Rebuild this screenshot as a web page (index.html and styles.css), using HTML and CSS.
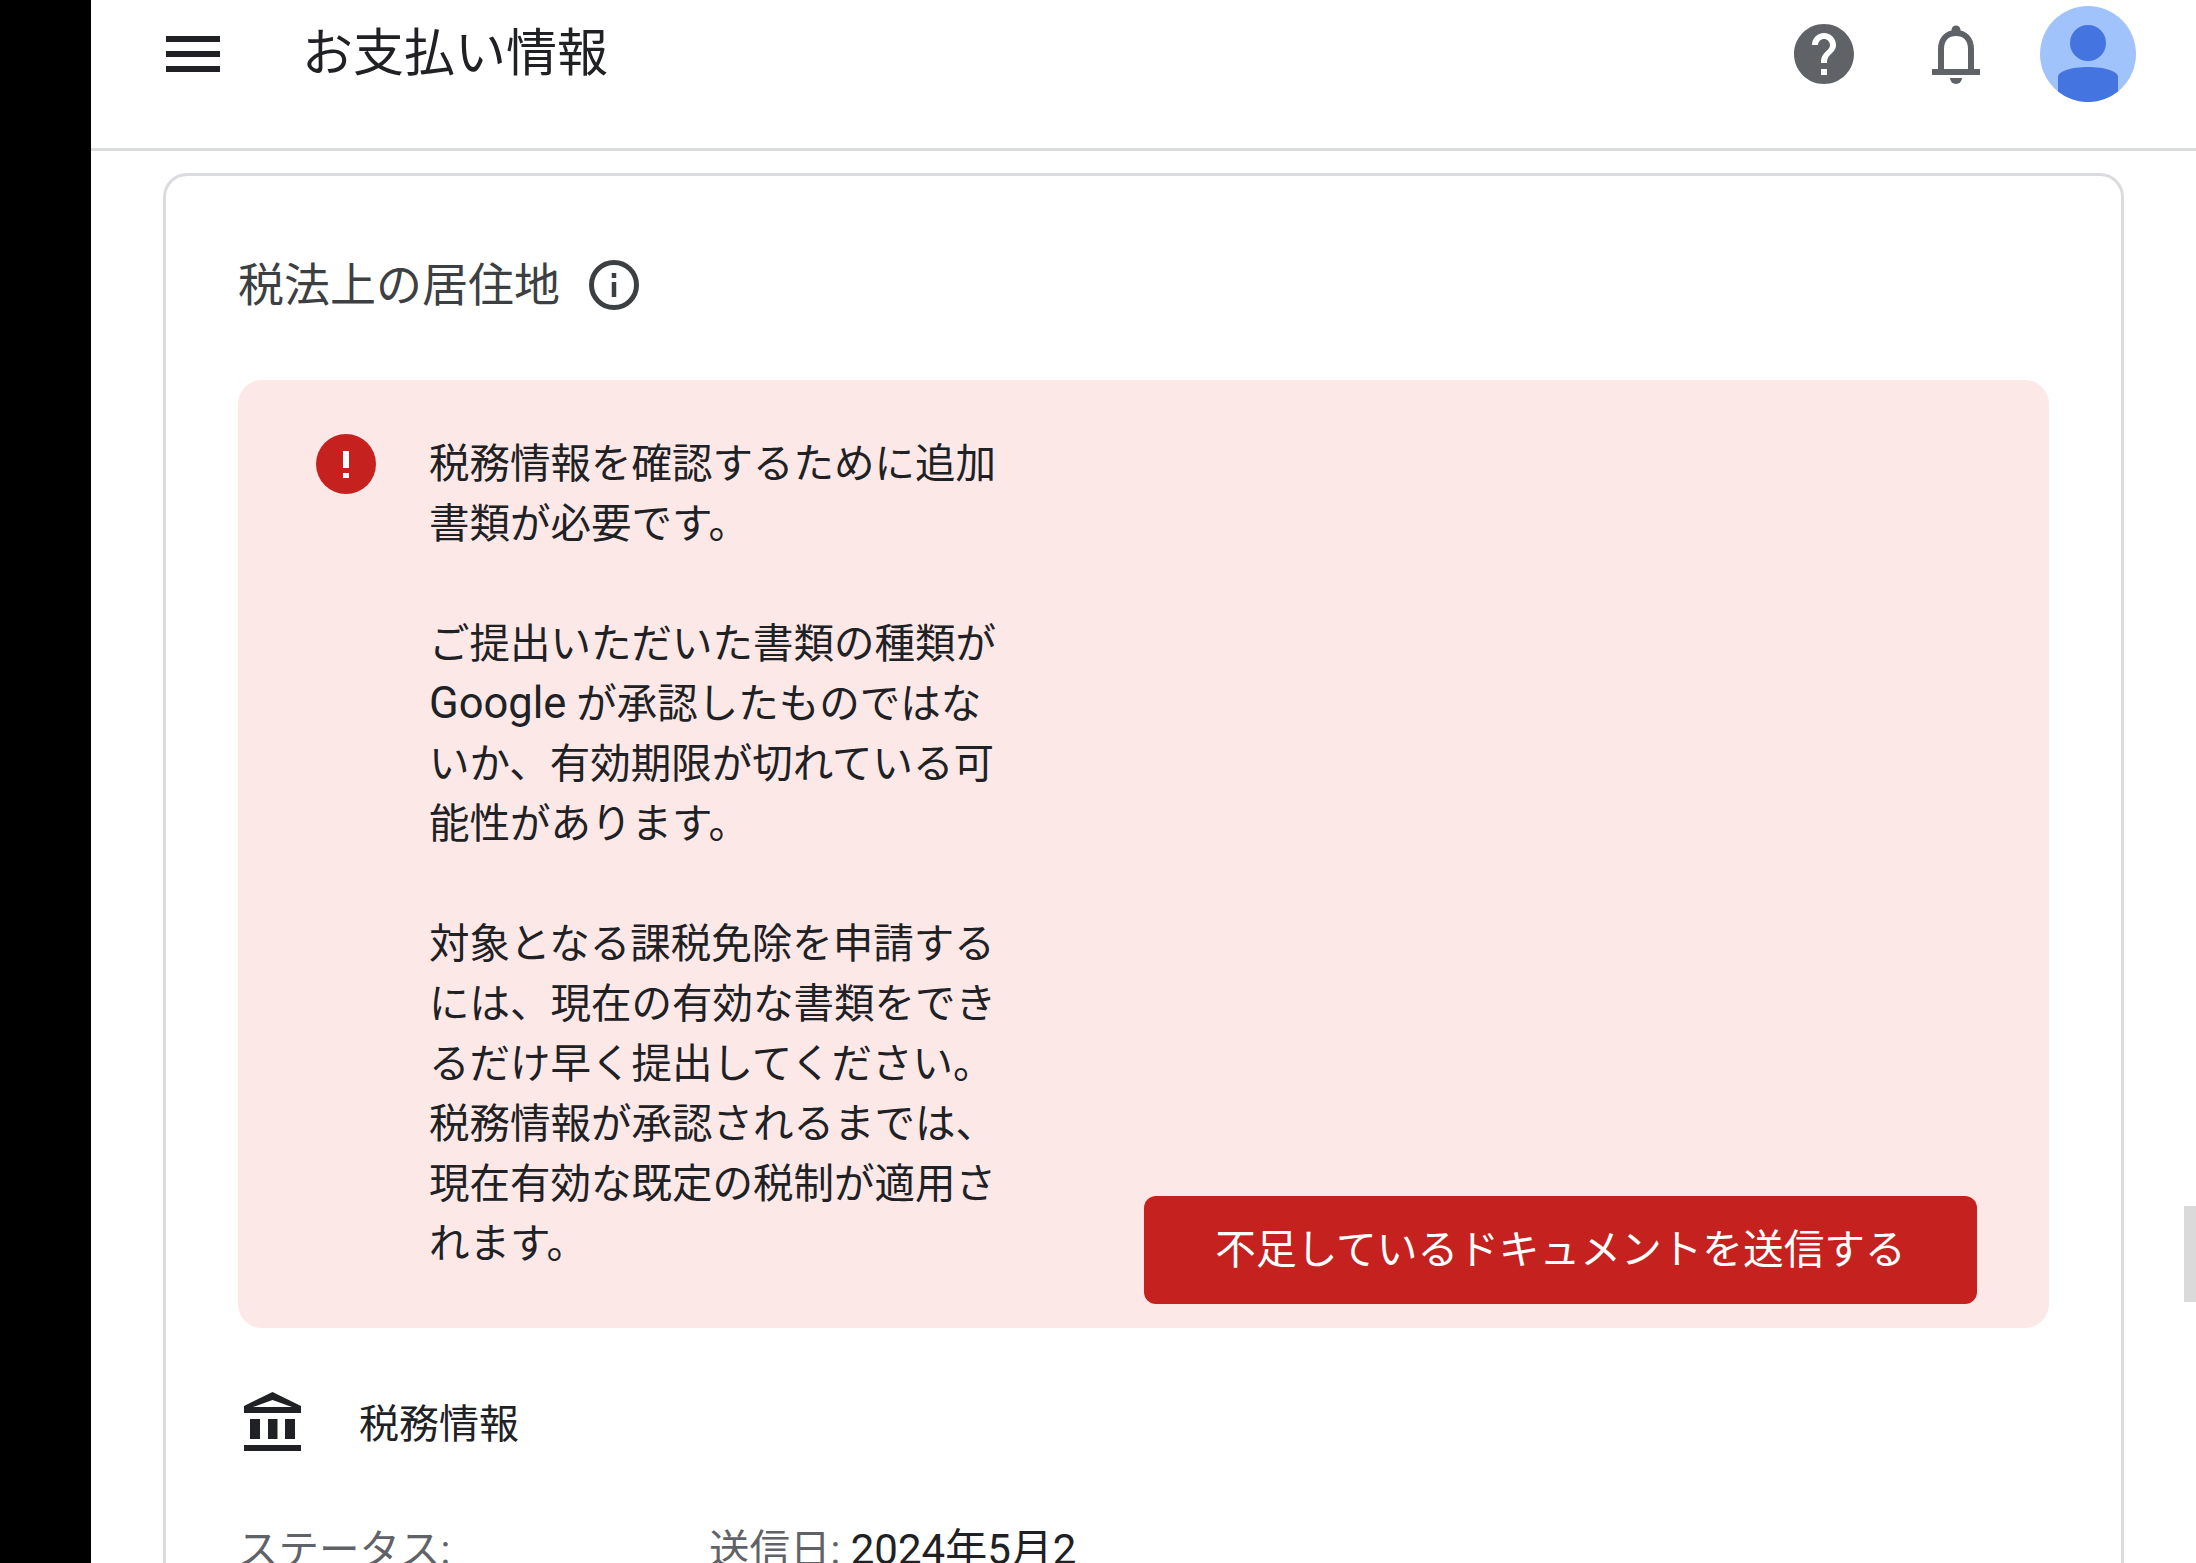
FILE: index.html
```html
<!DOCTYPE html>
<html lang="ja">
<head>
  <meta charset="UTF-8" />
  <meta name="viewport" content="width=device-width, initial-scale=1.0"/>
  <title>お支払い情報</title>
  <link rel="stylesheet" href="styles.css">
</head>
<body>
  <div class="side-bar"></div>

  <div class="page">
    <header class="top-bar">
      <svg class="menu-icon" viewBox="0 0 54 36">
        <rect width="54" height="6"/>
        <rect y="15" width="54" height="6"/>
        <rect y="30" width="54" height="6"/>
      </svg>
      <h1 class="page-title">お支払い情報</h1>

      <svg class="help-icon" viewBox="2 2 20 20">
        <path d="M12 2C6.48 2 2 6.48 2 12s4.48 10 10 10 10-4.48 10-10S17.52 2 12 2zm1 17h-2v-2h2v2zm2.07-7.75l-.9.92C13.45 12.9 13 13.5 13 15h-2v-.5c0-1.1.45-2.1 1.17-2.83l1.24-1.26c.37-.36.59-.86.59-1.41 0-1.1-.9-2-2-2s-2 .9-2 2H8c0-2.21 1.79-4 4-4s4 1.79 4 4c0 .88-.36 1.68-.93 2.25z"/>
      </svg>
      <svg class="bell-icon" viewBox="0 0 48 59">
        <circle cx="24" cy="5" r="4.5"/>
        <path class="bell-body" d="M9 45V24C9 14 15 8 24 8s15 6 15 16v21"/>
        <rect y="44" width="48" height="6"/>
        <path d="M18 53h12a6 6 0 0 1-12 0z"/>
      </svg>
      <svg class="avatar" viewBox="0 0 96 96">
        <circle class="avatar-bg" cx="48" cy="48" r="48"/>
        <circle cx="48" cy="37" r="18"/>
        <path d="M18 71C18 65 32 61 48 61s30 4 30 10v14.500A48 48 0 0 1 18 85.500z"/>
      </svg>
    </header>

    <main class="card">
      <div class="card-head">
        <h2>税法上の居住地</h2>
        <svg class="info-icon" viewBox="0 0 50 50">
          <circle class="info-ring" cx="25" cy="25" r="22.500"/>
          <rect x="22.750" y="22" width="4.500" height="15"/>
          <rect x="22.750" y="13" width="4.500" height="5"/>
        </svg>
      </div>

      <section class="alert">
        <svg class="alert-icon" viewBox="0 0 60 60">
          <circle class="alert-disc" cx="30" cy="30" r="30"/>
          <rect x="27" y="17" width="6" height="17"/>
          <rect x="27" y="39" width="6" height="5"/>
        </svg>
        <div class="alert-text">
          <p>税務情報を確認するために追加書類が必要です。</p>
          <p>ご提出いただいた書類の種類が<br><span class="latin">Google</span> が承認したものではないか、有効期限が切れている可能性があります。</p>
          <p>対象となる課税免除を申請するには、現在の有効な書類をできるだけ早く提出してください。<br>税務情報が承認されるまでは、現在有効な既定の税制が適用されます。</p>
        </div>
        <button class="alert-btn">不足しているドキュメントを送信する</button>
      </section>

      <div class="tax-row">
        <svg class="bank-icon" viewBox="0 0 57 59">
          <path fill-rule="evenodd" d="M28.500 0L57 14v7H0v-7zM28.500 8L9 15h39z"/>
          <rect x="6" y="27" width="10" height="20"/>
          <rect x="24" y="27" width="9.500" height="20"/>
          <rect x="41" y="27" width="10" height="20"/>
          <rect y="53" width="57" height="6"/>
        </svg>
        <span class="tax-label">税務情報</span>
      </div>

      <div class="status-row">
        <span class="status-label">ステータス:</span>
        <span class="status-value"><span class="muted">送信日:</span> 2024年5月2</span>
      </div>
    </main>
  </div>

  <div class="scroll-thumb"></div>
</body>
</html>
```

FILE: styles.css
```css
html, body {
  height: 100%;
}

body {
  margin: 0;
  display: flex;
  height: 1563px;
  overflow: hidden;
  background: white;
  color: #202124;
  font-family: Roboto, "Noto Sans CJK JP", sans-serif;
}

h1, h2, p {
  margin: 0;
  font-weight: 400;
}

.side-bar {
  width: 91px;
  flex: none;
  background: black;
}

.page {
  flex: 1;
  min-width: 0;
}

.top-bar {
  display: flex;
  align-items: center;
  height: 96px;
  padding: 6px 60px 46px 75px;
  border-bottom: 3px solid #dadce0;
}

.menu-icon {
  width: 54px;
  height: 36px;
  fill: #202124;
}

.page-title {
  flex: 1;
  margin-left: 82px;
  font-size: 51px;
  line-height: 70px;
}

.help-icon {
  width: 60px;
  height: 60px;
  fill: #5f6368;
}

.bell-icon {
  width: 48px;
  height: 59px;
  margin-left: 78px;
  fill: #5f6368;
}

.bell-body {
  fill: none;
  stroke: #5f6368;
  stroke-width: 6;
}

.avatar {
  width: 96px;
  height: 96px;
  margin-left: 60px;
  fill: #4374e0;
}

.avatar-bg {
  fill: #a0c3fb;
}

.card {
  margin: 22px 72px 0 72px;
  padding: 84px 72px 72px 72px;
  border: 3px solid #dadce0;
  border-radius: 24px;
}

.card-head {
  display: flex;
  align-items: center;
  gap: 29px;
  height: 50px;
  margin-bottom: 70px;
}

.card-head h2 {
  margin-bottom: 8px;
  font-size: 46px;
  color: #3c4043;
}

.info-icon {
  width: 50px;
  height: 50px;
  fill: #3c4043;
}

.info-ring {
  fill: none;
  stroke: #3c4043;
  stroke-width: 5;
}

.alert {
  display: flex;
  padding: 54px 72px 24px 78px;
  background: #fce8e6;
  border-radius: 24px;
}

.alert-icon {
  width: 60px;
  height: 60px;
  flex: none;
  fill: white;
}

.alert-disc {
  fill: #c5221f;
}

.alert-text {
  width: 574px;
  margin: 0 0 30px 53px;
  font-size: 40.500px;
  line-height: 60px;
  color: #202124;
}

.alert-text p + p {
  margin-top: 60px;
}

.latin {
  font-size: 43.500px;
}

.alert-btn {
  align-self: flex-end;
  width: 833px;
  height: 108px;
  margin-left: auto;
  padding: 0 0 7px;
  background: #c5221f;
  border: none;
  border-radius: 12px;
  color: white;
  font-family: inherit;
  font-size: 40.700px;
}

.tax-row {
  display: flex;
  align-items: center;
  gap: 58px;
  margin: 64px 0 0 6px;
  font-size: 40px;
  line-height: 50px;
  color: #202124;
}

.tax-label {
  padding-top: 6px;
}

.bank-icon {
  width: 57px;
  height: 59px;
  fill: #202124;
}

.status-row {
  display: flex;
  margin-top: 69px;
  font-size: 40.500px;
  line-height: 60px;
}

.status-label {
  width: 471px;
  color: #5f6368;
}

.status-value {
  font-size: 42px;
}

.muted {
  font-size: 40.500px;
  color: #5f6368;
}

.scroll-thumb {
  position: absolute;
  top: 1206px;
  right: 0;
  width: 12px;
  height: 96px;
  background: #dadada;
}
```
